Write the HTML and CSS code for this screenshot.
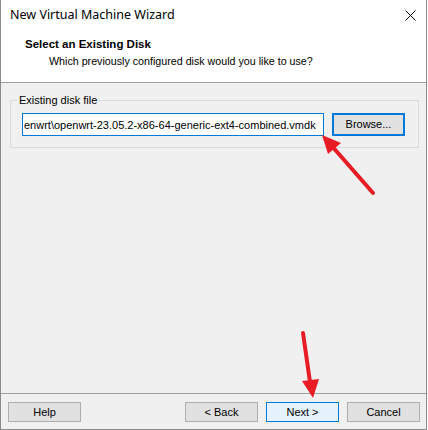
FILE: index.html
```html
<!DOCTYPE html>
<html>
<head>
<meta charset="utf-8">
<link rel="stylesheet" href="styles.css">
</head>
<body>
<div class="window">
  <div class="header">
    <div class="titlebar">
      <span class="title">New Virtual Machine Wizard</span>
      <svg class="close" width="11" height="11" viewBox="0 0 11 11"><path d="M0.5 0.5 L10.5 10.5 M10.5 0.5 L0.5 10.5" stroke="#000" stroke-width="1" fill="none"/></svg>
    </div>
    <div class="heading">Select an Existing Disk</div>
    <div class="subtitle">Which previously configured disk would you like to use?</div>
  </div>
  <div class="content">
    <div class="group">
      <span class="legend">Existing disk file</span>
      <div class="row">
        <div class="input"><span>enwrt\openwrt-23.05.2-x86-64-generic-ext4-combined.vmdk</span></div>
        <div class="btn browse">Browse...</div>
      </div>
    </div>
  </div>
  <div class="footer">
    <div class="btn">Help</div>
    <div class="spacer"></div>
    <div class="btn">&lt; Back</div>
    <div class="btn next">Next &gt;</div>
    <div class="btn">Cancel</div>
  </div>
  <svg class="arrows" width="428" height="430" viewBox="0 0 428 430">
    <g stroke="#e81c24" stroke-width="4" stroke-linecap="round" fill="#e81c24">
      <line x1="373" y1="193" x2="331" y2="145"/>
      <line x1="303" y1="333" x2="310" y2="382"/>
    </g>
    <g fill="#e81c24">
      <polygon points="322,135 341,143 328,154"/>
      <polygon points="313,398 302,381 319,379"/>
    </g>
  </svg>
</div>
</body>
</html>
```
FILE: styles.css
```css
html, body {
  margin: 0;
  padding: 0;
  background: #ffffff;
}
body {
  width: 428px;
  height: 430px;
  overflow: hidden;
  font-family: "Liberation Sans", Arial, sans-serif;
  font-size: 11px;
  color: #000;
}
.window {
  position: relative;
  width: 427px;
  height: 430px;
  box-sizing: border-box;
  border-left: 1px solid #8a8a8a;
  border-right: 1px solid #8a8a8a;
  border-bottom: 1px solid #8a8a8a;
  background: #f0f0f0;
  display: flex;
  flex-direction: column;
}
.header {
  height: 82px;
  box-sizing: content-box;
  background: #fff;
  border-bottom: 1px solid #a0a0a0;
}
.titlebar {
  display: flex;
  justify-content: space-between;
  align-items: flex-start;
  padding: 7px 10px 0 9px;
  height: 23px;
  box-sizing: border-box;
}
.title {
  font-family: "Noto Sans", "Open Sans", sans-serif;
  font-size: 12.5px;
  line-height: 16px;
}
.close {
  margin-top: 3px;
}
.heading {
  margin-top: 14px;
  padding-left: 24px;
  font-weight: bold;
  font-size: 11.5px;
  line-height: 15px;
}
.subtitle {
  margin-top: 2px;
  padding-left: 48px;
  font-size: 10.7px;
  line-height: 15px;
}
.content {
  flex: 1;
  padding: 17px 7px 0 9px;
}
.group {
  position: relative;
  border: 1px solid #dcdcdc;
  height: 34px;
  padding: 12px 0 0 11px;
  box-sizing: content-box;
  width: 396px;
}
.legend {
  position: absolute;
  top: -8px;
  left: 6px;
  padding: 0 2px;
  background: #f0f0f0;
  line-height: 15px;
}
.row {
  display: flex;
  gap: 8px;
  height: 23px;
}
.input {
  width: 302px;
  height: 23px;
  box-sizing: border-box;
  border: 1px solid #0078d7;
  background: #fff;
  overflow: hidden;
  white-space: nowrap;
  display: flex;
  align-items: center;
  padding-left: 1px;
}
.btn {
  width: 73px;
  height: 20px;
  box-sizing: border-box;
  border: 1px solid #adadad;
  background: #e1e1e1;
  display: flex;
  align-items: center;
  justify-content: center;
  line-height: 15px;
}
.browse {
  height: 23px;
  border: 2px solid #0078d7;
}
.next {
  border-color: #0078d7;
  background: #e5f1fb;
}
.footer {
  border-top: 1px solid #a0a0a0;
  display: flex;
  gap: 8px;
  padding: 8px 6px 0 7px;
  box-sizing: border-box;
  height: 36px;
}
.spacer {
  flex: 1;
}
.arrows {
  position: absolute;
  left: -1px;
  top: 0;
  pointer-events: none;
}
```
